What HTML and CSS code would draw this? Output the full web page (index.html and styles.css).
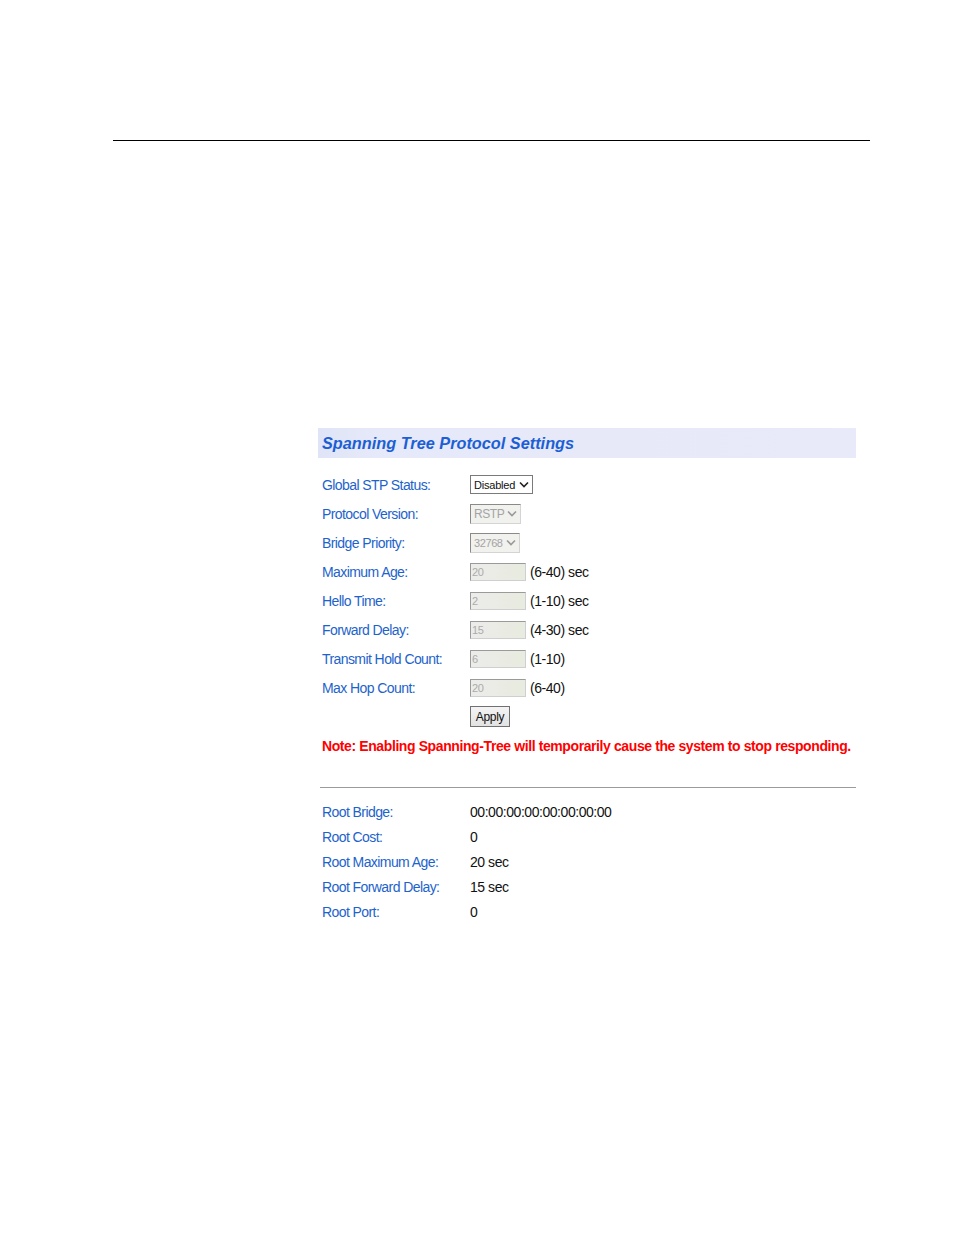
FILE: index.html
```html
<!DOCTYPE html>
<html>
<head>
<meta charset="utf-8">
<link rel="stylesheet" href="styles.css">
</head>
<body>
<div class="page">
  <div class="rule"></div>
  <div class="panel">
    <div class="header"><span class="title">Spanning Tree Protocol Settings</span></div>
    <div class="form">
      <div class="row">
        <div class="label">Global STP Status:</div>
        <div class="field">
          <div class="sel sel-global"><span>Disabled</span>
            <svg class="chev" width="10" height="7" viewBox="0 0 10 7"><path d="M1 1.5 L5 5.5 L9 1.5" fill="none" stroke="#222" stroke-width="1.6"/></svg>
          </div>
        </div>
      </div>
      <div class="row">
        <div class="label">Protocol Version:</div>
        <div class="field">
          <div class="sel sel-dis sel-proto"><span>RSTP</span>
            <svg class="chev" width="10" height="7" viewBox="0 0 10 7"><path d="M1 1.5 L5 5.5 L9 1.5" fill="none" stroke="#9a9a9a" stroke-width="1.6"/></svg>
          </div>
        </div>
      </div>
      <div class="row">
        <div class="label">Bridge Priority:</div>
        <div class="field">
          <div class="sel sel-dis sel-prio"><span>32768</span>
            <svg class="chev" width="10" height="7" viewBox="0 0 10 7"><path d="M1 1.5 L5 5.5 L9 1.5" fill="none" stroke="#9a9a9a" stroke-width="1.6"/></svg>
          </div>
        </div>
      </div>
      <div class="row">
        <div class="label">Maximum Age:</div>
        <div class="field"><div class="inp">20</div><span class="hint">(6-40) sec</span></div>
      </div>
      <div class="row">
        <div class="label">Hello Time:</div>
        <div class="field"><div class="inp">2</div><span class="hint">(1-10) sec</span></div>
      </div>
      <div class="row">
        <div class="label">Forward Delay:</div>
        <div class="field"><div class="inp">15</div><span class="hint">(4-30) sec</span></div>
      </div>
      <div class="row">
        <div class="label">Transmit Hold Count:</div>
        <div class="field"><div class="inp">6</div><span class="hint">(1-10)</span></div>
      </div>
      <div class="row">
        <div class="label">Max Hop Count:</div>
        <div class="field"><div class="inp">20</div><span class="hint">(6-40)</span></div>
      </div>
      <div class="row">
        <div class="label"></div>
        <div class="field"><div class="btn">Apply</div></div>
      </div>
      <div class="note">Note: Enabling Spanning-Tree will temporarily cause the system to stop responding.</div>
    </div>
    <div class="sep"></div>
    <div class="info">
      <div class="irow"><div class="label">Root Bridge:</div><div class="val">00:00:00:00:00:00:00:00</div></div>
      <div class="irow"><div class="label">Root Cost:</div><div class="val">0</div></div>
      <div class="irow"><div class="label">Root Maximum Age:</div><div class="val">20 sec</div></div>
      <div class="irow"><div class="label">Root Forward Delay:</div><div class="val">15 sec</div></div>
      <div class="irow"><div class="label">Root Port:</div><div class="val">0</div></div>
    </div>
  </div>
</div>
</body>
</html>
```
FILE: styles.css
```css
html, body {
  margin: 0;
  padding: 0;
  background: #ffffff;
}
body {
  font-family: "Liberation Sans", Arial, sans-serif;
}
.page {
  width: 954px;
  height: 1235px;
  padding-top: 140px;
  box-sizing: border-box;
}
.rule {
  margin-left: 113px;
  width: 757px;
  height: 0;
  border-top: 1px solid #000;
}
.panel {
  margin-left: 318px;
  margin-top: 287px;
  width: 538px;
}
.header {
  height: 30px;
  background: linear-gradient(to right, #dfe5f7 0px, #e6e9f9 60px, #e8e9f9 100%);
  display: flex;
  align-items: center;
  padding-left: 4px;
}
.title {
  font-size: 16.3px;
  font-weight: bold;
  font-style: italic;
  color: #1c5fd4;
  margin-top: 1px;
}
.form {
  padding-top: 12px;
  padding-left: 4px;
}
.row {
  display: grid;
  grid-template-columns: 148px auto;
  align-items: center;
  height: 29px;
}
.label {
  font-size: 14px;
  color: #1d63cc;
  letter-spacing: -0.58px;
  white-space: nowrap;
}
.field {
  display: flex;
  align-items: center;
}
.sel {
  box-sizing: border-box;
  height: 19px;
  display: flex;
  align-items: center;
  justify-content: space-between;
  padding: 0 3px 0 3px;
  font-size: 11px;
  letter-spacing: -0.2px;
}
.sel-global {
  width: 63px;
  border: 1px solid #7a7a7a;
  background: #fff;
  color: #111;
}
.sel-dis {
  height: 20px;
  border-top: 1px solid #8a8a8a;
  border-left: 1px solid #8a8a8a;
  border-right: 1px solid #d4d4d4;
  border-bottom: 1px solid #d4d4d4;
  background: #f1f1ee;
  color: #a4a4a4;
  font-size: 12px;
  letter-spacing: -0.4px;
}
.sel-proto { width: 51px; }
.sel-prio { width: 50px; font-size: 11px; }
.chev { display: block; }
.inp {
  box-sizing: border-box;
  width: 56px;
  height: 18px;
  border-top: 1px solid #9a9a9a;
  border-left: 1px solid #9a9a9a;
  border-right: 1px solid #cfcfcf;
  border-bottom: 1px solid #cfcfcf;
  background: linear-gradient(to right, #ececea, #e8ebdf);
  color: #ababab;
  font-size: 11px;
  line-height: 16px;
  padding-left: 1px;
  letter-spacing: -0.3px;
}
.hint {
  margin-left: 4px;
  font-size: 14px;
  letter-spacing: -0.45px;
  color: #111;
  white-space: nowrap;
}
.btn {
  box-sizing: border-box;
  width: 40px;
  height: 21px;
  border: 1px solid #707070;
  background: linear-gradient(#f4f4f4, #e2e2e2);
  font-size: 12px;
  letter-spacing: -0.3px;
  color: #111;
  display: flex;
  align-items: center;
  justify-content: center;
}
.note {
  height: 29px;
  display: flex;
  align-items: center;
  font-size: 14px;
  font-weight: bold;
  color: #ff0000;
  letter-spacing: -0.4px;
  white-space: nowrap;
}
.sep {
  margin: 27px 0 11px 2px;
  height: 1px;
  background: #9b9b9b;
}
.info {
  padding-left: 4px;
}
.irow {
  display: grid;
  grid-template-columns: 148px auto;
  align-items: center;
  height: 25px;
}
.val {
  font-size: 14px;
  letter-spacing: -0.45px;
  color: #111;
  white-space: nowrap;
}
```
